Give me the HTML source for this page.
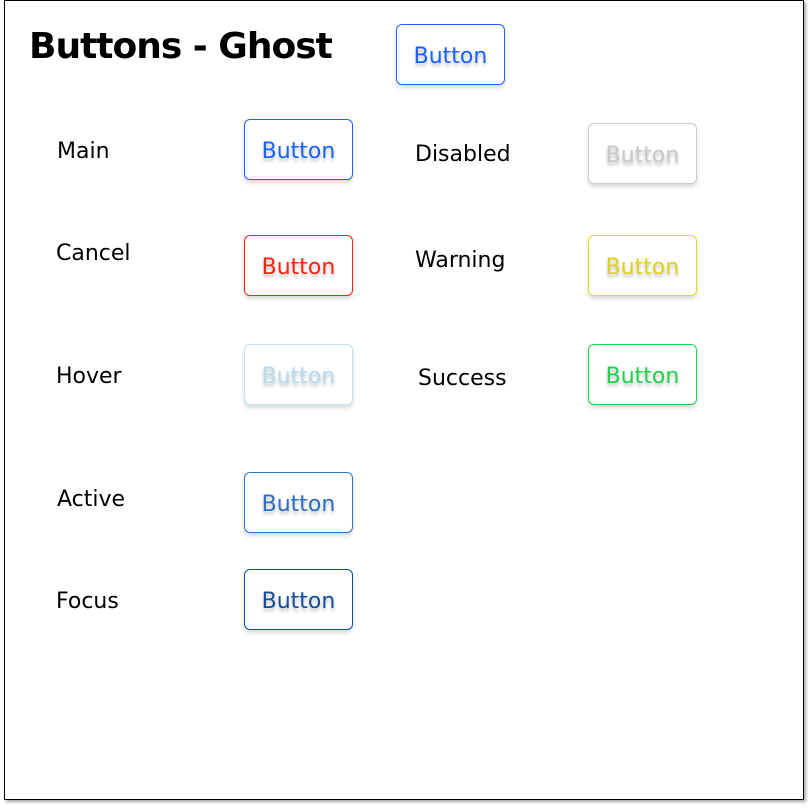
<!DOCTYPE html>
<html><head><style>
body{margin:0;width:808px;height:808px;background:#fff;position:relative;font-family:"DejaVu Sans","Liberation Sans",sans-serif;overflow:hidden}
.frame{position:absolute;left:4px;top:0;width:798px;height:798px;border:1px solid #000;box-shadow:2px 2px 3px rgba(0,0,0,.35)}
h1{position:absolute;left:29px;top:26px;margin:0;font-size:36px;font-weight:bold;letter-spacing:-1px;color:#000}
.l{position:absolute;font-size:22px;color:#000;line-height:1}
.b{position:absolute;width:107px;height:59px;border:1px solid;border-radius:6px;box-sizing:content-box;font-size:22px;text-align:center;line-height:64px;box-shadow:0 3px 4px rgba(0,0,0,.15);text-shadow:0 3px 3px rgba(0,0,0,.25);background:#fff}
</style></head><body>
<div class="frame"></div>
<h1>Buttons - Ghost</h1>
<div class="b" style="left:396px;top:24px;border-color:#1a62ff;color:#1a62ff">Button</div>
<div class="l" style="left:57px;top:141px">Main</div>
<div class="b" style="left:244px;top:119px;border-color:#1a62ff;color:#1a62ff">Button</div>
<div class="l" style="left:415px;top:144px">Disabled</div>
<div class="b" style="left:588px;top:123px;border-color:#ccc;color:#c8c8c8">Button</div>
<div class="l" style="left:56px;top:243px">Cancel</div>
<div class="b" style="left:244px;top:235px;border-color:#f21;color:#f21">Button</div>
<div class="l" style="left:415px;top:250px">Warning</div>
<div class="b" style="left:588px;top:235px;border-color:#e5dc10;color:#e0d21a">Button</div>
<div class="l" style="left:56px;top:366px">Hover</div>
<div class="b" style="left:244px;top:344px;border-color:#bfe3f7;color:#b5dcf2">Button</div>
<div class="l" style="left:418px;top:368px">Success</div>
<div class="b" style="left:588px;top:344px;border-color:#1fd34a;color:#1fd34a">Button</div>
<div class="l" style="left:57px;top:489px">Active</div>
<div class="b" style="left:244px;top:472px;border-color:#2e74c9;color:#2e6fc2">Button</div>
<div class="l" style="left:56px;top:591px">Focus</div>
<div class="b" style="left:244px;top:569px;border-color:#11509c;color:#134f98">Button</div>
</body></html>
